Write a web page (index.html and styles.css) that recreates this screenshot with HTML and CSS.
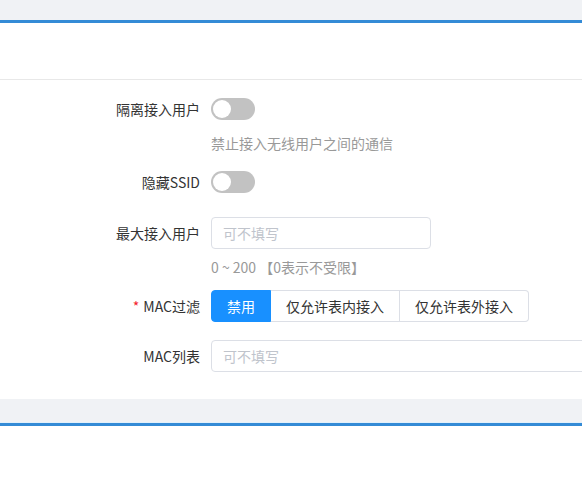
FILE: index.html
```html
<!DOCTYPE html>
<html lang="zh">
<head>
<meta charset="utf-8">
<link rel="stylesheet" href="styles.css">
</head>
<body>
<div class="strip"></div>
<section class="card">
  <div class="card-head"></div>
  <div class="card-body">
    <div class="item">
      <div class="row">
        <label class="label">隔离接入用户</label>
        <span class="switch"><span class="knob"></span></span>
      </div>
      <div class="hint">禁止接入无线用户之间的通信</div>
    </div>
    <div class="item">
      <div class="row">
        <label class="label">隐藏SSID</label>
        <span class="switch"><span class="knob"></span></span>
      </div>
    </div>
    <div class="item">
      <div class="row">
        <label class="label">最大接入用户</label>
        <input class="input short" type="text" placeholder="可不填写">
      </div>
      <div class="hint">0 ~ 200 【0表示不受限】</div>
    </div>
    <div class="item">
      <div class="row">
        <label class="label"><span class="req">*</span> MAC过滤</label>
        <div class="radio-group">
          <span class="radio active">禁用</span>
          <span class="radio">仅允许表内接入</span>
          <span class="radio">仅允许表外接入</span>
        </div>
      </div>
    </div>
    <div class="item last">
      <div class="row">
        <label class="label">MAC列表</label>
        <input class="input long" type="text" placeholder="可不填写">
      </div>
    </div>
  </div>
</section>
<div class="strip bottom"></div>
<section class="card empty"></section>
</body>
</html>
```

FILE: styles.css
```css
html, body {
  margin: 0;
  padding: 0;
  overflow: hidden;
  background: #ffffff;
  font-family: "Noto Sans CJK SC", "Noto Sans", sans-serif;
  font-size: 14px;
  color: #333333;
}
.strip {
  height: 20px;
  background: #f0f2f5;
}
.strip.bottom {
  height: 23px;
  background: #f0f2f5;
  border-bottom: 1px solid #e3f1fb;
}
.card {
  background: #ffffff;
  border-top: 3px solid #348bd6;
  overflow: hidden;
}
.card.empty {
  height: 80px;
}
.card-head {
  height: 56px;
  border-bottom: 1px solid #e8e8e8;
}
.card-body {
  padding: 13px 0 9px 0;
}
.item {
  margin-bottom: 18px;
}
.item.with-hint {
  margin-bottom: 13px;
}
.item:nth-child(1), .item:nth-child(3) {
  margin-bottom: 13px;
}
.item:nth-child(2) {
  margin-bottom: 19px;
}
.row {
  display: flex;
  align-items: center;
  height: 32px;
}
.label {
  width: 200px;
  padding-right: 11px;
  text-align: right;
  flex-shrink: 0;
  line-height: 32px;
  color: #333333;
}
.req {
  color: #f5222d;
  margin-right: 1px;
}
.hint {
  margin-top: 8px;
  margin-left: 211px;
  line-height: 20px;
  color: #999999;
}
.switch {
  position: relative;
  display: inline-block;
  width: 44px;
  height: 22px;
  border-radius: 11px;
  background: #c2c2c2;
  flex-shrink: 0;
}
.knob {
  position: absolute;
  left: 2px;
  top: 2px;
  width: 18px;
  height: 18px;
  border-radius: 50%;
  background: #ffffff;
}
.input {
  box-sizing: border-box;
  height: 32px;
  border: 1px solid #dcdfe6;
  border-radius: 4px;
  padding: 0 11px;
  font-family: inherit;
  font-size: 14px;
  color: #333333;
  outline: none;
  flex-shrink: 0;
}
.input::placeholder {
  color: #c0c4cc;
}
.input.short {
  width: 220px;
}
.input.long {
  width: 420px;
}
.radio-group {
  display: flex;
  height: 32px;
}
.radio {
  box-sizing: border-box;
  height: 32px;
  line-height: 30px;
  padding: 0 15px;
  border: 1px solid #dcdfe6;
  border-left: none;
  color: #333333;
  background: #ffffff;
}
.radio:first-child {
  border-left: 1px solid #dcdfe6;
  border-radius: 4px 0 0 4px;
}
.radio:last-child {
  border-radius: 0 4px 4px 0;
}
.radio.active {
  background: #1890ff;
  border-color: #1890ff;
  color: #ffffff;
}
```
